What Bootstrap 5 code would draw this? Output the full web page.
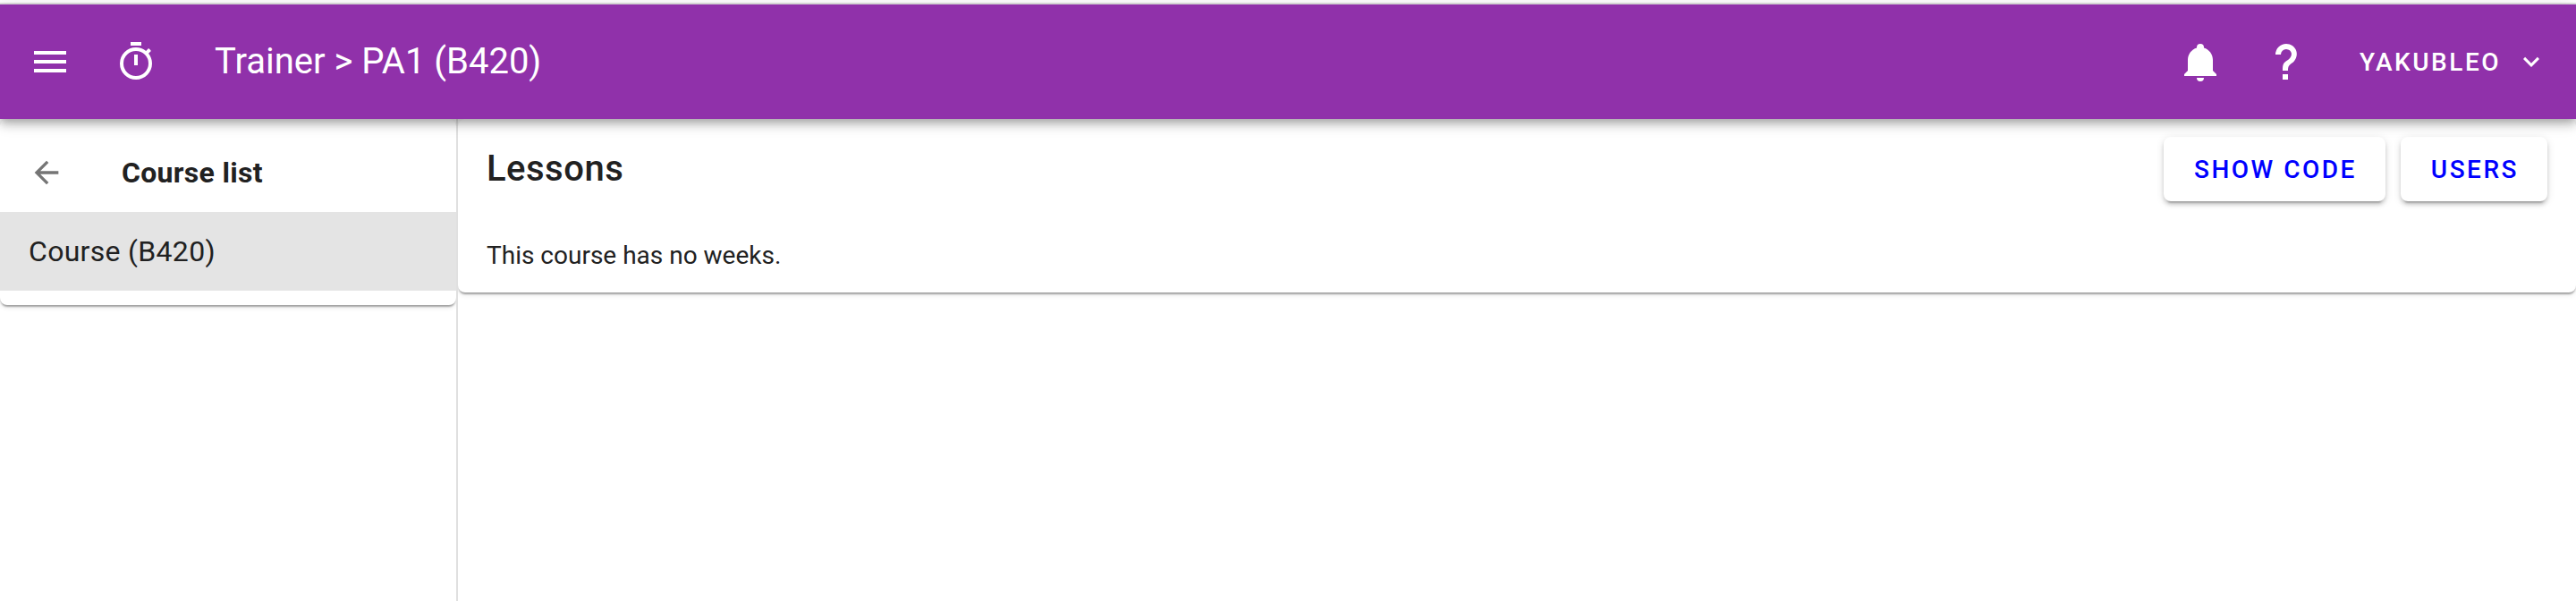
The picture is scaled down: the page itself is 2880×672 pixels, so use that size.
<!DOCTYPE html>
<html lang="en">
<head>
<meta charset="utf-8">
<title>Trainer</title>
<link href="https://cdn.jsdelivr.net/npm/bootstrap@5.3.0/dist/css/bootstrap.min.css" rel="stylesheet">
<style>
  body { font-family: Roboto, "Liberation Sans", sans-serif; color: #212121; background: #fff; font-size: 28px; height: 672px; overflow: hidden; }
  svg { fill: currentColor; display: block; flex: none; }
  .page-rule { height: 5px; border-bottom: 2px solid #e0e0e0; }
  .app-bar { height: 128px; padding: 0 32px; background: #9031aa; z-index: 5;
    box-shadow: 0 4px 8px -2px rgba(0,0,0,.2), 0 8px 10px 0 rgba(0,0,0,.14), 0 2px 20px 0 rgba(0,0,0,.12); }
  .ico { width: 48px; height: 48px; }
  .bar-title { font-size: 40px; line-height: 60px; margin-left: 64px; }
  .user-btn { font-size: 28px; line-height: 36px; font-weight: 500; letter-spacing: 2.5px; margin-left: 58px; color: #fff; }
  .user-btn span { padding-top: 2px; }
  .side { width: 512px; border-right: 2px solid #e0e0e0; }
  .sheet { background: #fff; border-radius: 8px;
    box-shadow: 0 4px 2px -2px rgba(0,0,0,.2), 0 2px 2px 0 rgba(0,0,0,.14), 0 2px 6px 0 rgba(0,0,0,.12); }
  .side-sheet { height: 208px; padding-top: 16px; }
  .side-head { height: 88px; padding: 0 32px; font-size: 32px; letter-spacing: .3px; }
  .side-head svg { width: 40px; height: 40px; color: #757575; margin-right: 64px; }
  .side-item { height: 88px; padding: 0 32px; font-size: 32px; letter-spacing: .3px; background: #e4e4e4; color: #212121; }
  .main-sheet { height: 194px; padding: 20px 32px 0; }
  .main-head { height: 72px; }
  .main-title { font-size: 40px; line-height: 64px; letter-spacing: .5px; }
  .acts { gap: 17px; }
  .act { height: 72px; padding: 2px 32px 0 34px; border: 0; border-radius: 8px; background: #fff; color: #00f; font-size: 28px; font-weight: 500; letter-spacing: 2.5px; white-space: nowrap;
    box-shadow: 0 6px 2px -4px rgba(0,0,0,.2), 0 4px 4px 0 rgba(0,0,0,.14), 0 2px 10px 0 rgba(0,0,0,.12); }
  .note { margin-top: 41px; line-height: 40px; }
</style>
</head>
<body class="d-flex flex-column">
<div class="page-rule flex-shrink-0"></div>
<header class="app-bar d-flex align-items-center flex-shrink-0 position-relative text-white">
  <svg class="ico" viewBox="0 0 24 24"><path d="M3,6H21V8H3V6M3,11H21V13H3V11M3,16H21V18H3V16Z"/></svg>
  <svg class="ico ms-5" viewBox="0 0 24 24"><path d="M12,20A7,7 0 0,1 5,13A7,7 0 0,1 12,6A7,7 0 0,1 19,13A7,7 0 0,1 12,20M19.03,7.39L20.45,5.97C20,5.46 19.55,5 19.04,4.56L17.62,6C16.07,4.74 14.12,4 12,4A9,9 0 0,0 3,13A9,9 0 0,0 12,22C17,22 21,17.97 21,13C21,10.88 20.26,8.93 19.03,7.39M11,14H13V8H11M15,1H9V3H15V1Z"/></svg>
  <div class="bar-title">Trainer &gt; PA1 (B420)</div>
  <svg class="ico ms-auto" viewBox="0 0 24 24"><path d="M21,19V20H3V19L5,17V11C5,7.9 7.03,5.17 10,4.29C10,4.19 10,4.1 10,4A2,2 0 0,1 12,2A2,2 0 0,1 14,4C14,4.1 14,4.19 14,4.29C16.97,5.17 19,7.9 19,11V17L21,19M14,21A2,2 0 0,1 12,23A2,2 0 0,1 10,21"/></svg>
  <svg class="ico ms-5" viewBox="0 0 24 24"><path d="M10,19H13V22H10V19M12,2C17.35,2.22 19.68,7.62 16.5,11.67C15.67,12.67 14.33,13.33 13.67,14.17C13,15 13,16 13,17H10C10,15.33 10,13.92 10.67,12.92C11.33,11.92 12.67,11.33 13.5,10.67C15.92,8.43 15.32,5.26 12,5A3,3 0 0,0 9,8H6A6,6 0 0,1 12,2Z"/></svg>
  <button class="user-btn btn border-0 p-0 d-flex align-items-center"><span>YAKUBLEO</span>
    <svg class="ms-3" width="36" height="36" viewBox="0 0 24 24"><path d="M7.41,8.58L12,13.17L16.59,8.58L18,10L12,16L6,10L7.41,8.58Z"/></svg>
  </button>
</header>
<div class="d-flex flex-grow-1">
  <aside class="side flex-shrink-0 overflow-hidden">
    <div class="sheet side-sheet">
      <div class="side-head d-flex align-items-center fw-bold">
        <svg viewBox="0 0 24 24"><path d="M20,11V13H7.83L13.42,18.59L12,20L4,12L12,4L13.41,5.41L7.83,11H20Z"/></svg>
        Course list
      </div>
      <a class="side-item d-flex align-items-center text-decoration-none" href="#">Course (B420)</a>
    </div>
  </aside>
  <main class="flex-grow-1 overflow-hidden">
    <div class="sheet main-sheet">
      <div class="main-head d-flex align-items-center justify-content-between">
        <h1 class="main-title fw-medium m-0">Lessons</h1>
        <div class="acts d-flex">
          <button class="act btn">SHOW CODE</button>
          <button class="act btn">USERS</button>
        </div>
      </div>
      <p class="note mb-0">This course has no weeks.</p>
    </div>
  </main>
</div>
<script src="https://cdn.jsdelivr.net/npm/bootstrap@5.3.0/dist/js/bootstrap.bundle.min.js"></script>
</body>
</html>
